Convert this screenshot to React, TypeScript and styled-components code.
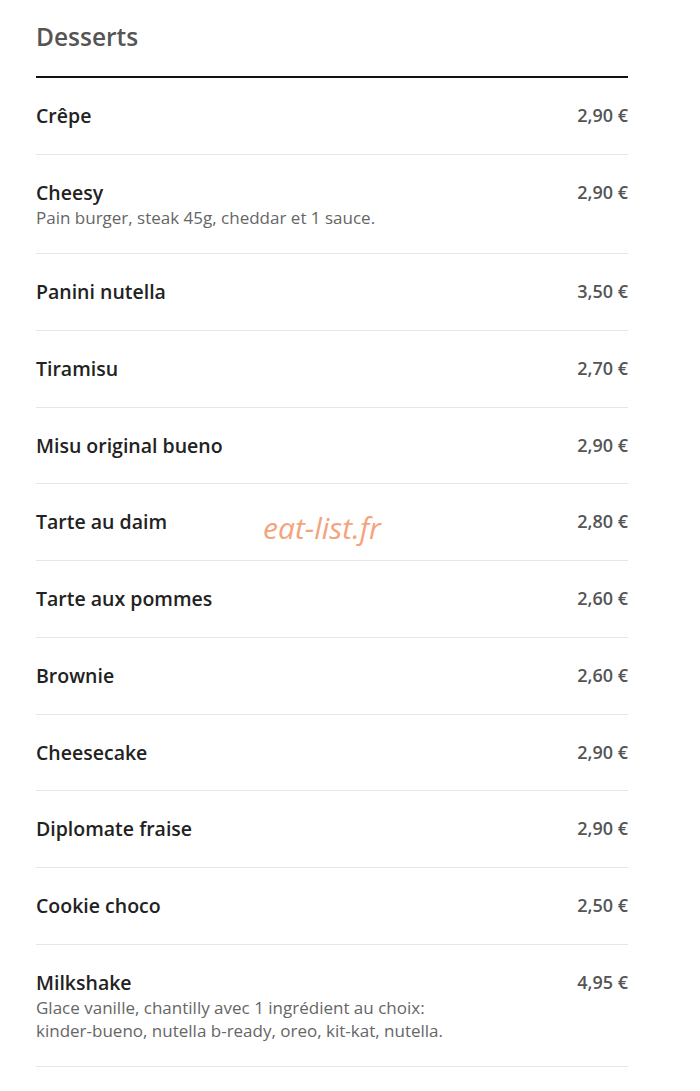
import styled, { createGlobalStyle } from 'styled-components';

const GlobalStyle = createGlobalStyle`
  body {
    margin: 0;
    background: #fff;
    font-family: 'Open Sans', 'Noto Sans', sans-serif;
  }
`;

const Container = styled.div`
  position: relative;
  padding: 0 72px 0 36px;
`;

const Header = styled.header`
  padding: 21px 0 23px;
  border-bottom: 2px solid #111;
`;

const Title = styled.h2`
  margin: 0;
  font-size: 24.5px;
  line-height: 32px;
  font-weight: 600;
  color: #555;
`;

const MenuList = styled.ul`
  list-style: none;
  margin: 0;
  padding: 0;
`;

const Item = styled.li`
  display: flex;
  justify-content: space-between;
  align-items: flex-start;
  padding: 25px 0 24.7px;
  border-bottom: 1px solid #e6e6e6;
`;

const Info = styled.div`
  display: flex;
  flex-direction: column;
`;

const Name = styled.span`
  font-size: 19.5px;
  line-height: 26px;
  font-weight: 600;
  color: #222;
`;

const Desc = styled.p`
  margin: 0;
  font-size: 17px;
  line-height: 23px;
  color: #666;
`;

const Price = styled.span`
  font-size: 18px;
  line-height: 24px;
  font-weight: 600;
  color: #555;
  white-space: nowrap;
`;

const Watermark = styled.span`
  position: absolute;
  left: 263px;
  top: 507px;
  font-size: 30px;
  font-style: italic;
  color: #f3a47c;
  pointer-events: none;
`;

type Dessert = { name: string; price: string; desc?: string[] };

const desserts: Dessert[] = [
  { name: 'Crêpe', price: '2,90 €' },
  { name: 'Cheesy', price: '2,90 €', desc: ['Pain burger, steak 45g, cheddar et 1 sauce.'] },
  { name: 'Panini nutella', price: '3,50 €' },
  { name: 'Tiramisu', price: '2,70 €' },
  { name: 'Misu original bueno', price: '2,90 €' },
  { name: 'Tarte au daim', price: '2,80 €' },
  { name: 'Tarte aux pommes', price: '2,60 €' },
  { name: 'Brownie', price: '2,60 €' },
  { name: 'Cheesecake', price: '2,90 €' },
  { name: 'Diplomate fraise', price: '2,90 €' },
  { name: 'Cookie choco', price: '2,50 €' },
  {
    name: 'Milkshake',
    price: '4,95 €',
    desc: [
      'Glace vanille, chantilly avec 1 ingrédient au choix:',
      'kinder-bueno, nutella b-ready, oreo, kit-kat, nutella.',
    ],
  },
];

const App = () => {
  return (
    <>
      <GlobalStyle />
      <Container>
        <Header>
          <Title>Desserts</Title>
        </Header>
        <MenuList>
          {desserts.map((d) => (
            <Item key={d.name}>
              <Info>
                <Name>{d.name}</Name>
                {d.desc && (
                  <Desc>
                    {d.desc.map((line, i) => (
                      <span key={i}>
                        {line}
                        {i < d.desc!.length - 1 && <br />}
                      </span>
                    ))}
                  </Desc>
                )}
              </Info>
              <Price>{d.price}</Price>
            </Item>
          ))}
        </MenuList>
        <Watermark>eat-list.fr</Watermark>
      </Container>
    </>
  );
};

export default App;
